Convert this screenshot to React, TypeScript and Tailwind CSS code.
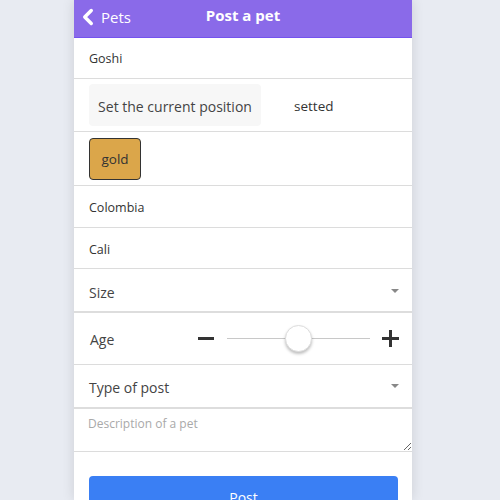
import { ChevronLeft } from 'lucide-react';

export default function App() {
  const font = { fontFamily: '"Open Sans", "Noto Sans", sans-serif' };

  return (
    <div className="w-[500px] h-[500px] overflow-hidden bg-[#e8ebf2]" style={font}>
      <div className="ml-[74px] w-[338px] h-[500px] bg-white shadow-[0_0_12px_rgba(0,0,0,0.12)]">
        {/* Header */}
        <div className="relative h-[38px] bg-[#8a6ae9] border-b border-[#7453ef] flex items-center pb-[3px]">
          <div className="flex items-center text-white text-[15px] pl-[1px]">
            <ChevronLeft className="w-[26px] h-[26px]" strokeWidth={3.2} />
            <span>Pets</span>
          </div>
          <div className="absolute left-0 right-0 text-center text-white text-[15px] font-bold pointer-events-none pb-[3px]">
            Post a pet
          </div>
        </div>

        {/* Name */}
        <div className="h-[41px] border-b border-[#dcdcdc] flex items-center px-[15px] pt-[3px] text-[12.5px] text-[#333]">
          Goshi
        </div>

        {/* Position */}
        <div className="h-[53px] border-b border-[#dcdcdc] flex items-center px-[15px]">
          <div className="w-[172px] h-[42px] bg-[#f7f7f7] rounded flex items-center justify-center pt-[2px] text-[14px] text-[#444]">
            Set the current position
          </div>
          <span className="ml-[33px] mt-[3px] text-[13.5px] text-[#333]">setted</span>
        </div>

        {/* Colour */}
        <div className="h-[54px] border-b border-[#dcdcdc] flex items-center px-[15px]">
          <div className="w-[52px] h-[42px] bg-[#dba64a] border border-[#333] rounded-[4px] flex items-center justify-center pt-[2px] text-[13.5px] text-[#333]">
            gold
          </div>
        </div>

        {/* Country */}
        <div className="h-[42px] border-b border-[#dcdcdc] flex items-center px-[15px] pt-[4px] text-[12.5px] text-[#333]">
          Colombia
        </div>

        {/* City */}
        <div className="h-[41px] border-b border-[#dcdcdc] flex items-center px-[15px] pt-[4px] text-[12.5px] text-[#333]">
          Cali
        </div>

        {/* Size */}
        <div className="h-[44px] border-b-2 border-[#dddddd] flex items-center justify-between px-[15px] text-[14px] text-[#444]">
          <span className="mt-[4px]">Size</span>
          <span className="w-0 h-0 border-l-[4px] border-r-[4px] border-t-[4px] border-l-transparent border-r-transparent border-t-[#888] mr-[-2px] mt-[2px]" />
        </div>

        {/* Age */}
        <div className="h-[52px] border-b border-[#dcdcdc] flex items-center pl-[16px] pr-[13px] text-[14px] text-[#444]">
          <span className="w-[108px] mt-[1px]">Age</span>
          <span className="w-[16px] h-[3px] bg-[#333]" />
          <div className="relative flex-1 ml-[13px] mr-[12px] h-[26px] flex items-center">
            <div className="w-full h-px bg-[#c8c8c8]" />
            <div className="absolute left-[58px] w-[27px] h-[27px] rounded-full bg-white border border-[#ddd] shadow-[0_2px_3px_rgba(0,0,0,0.25)]" />
          </div>
          <span className="relative w-[17px] h-[17px]">
            <span className="absolute left-0 top-[7px] w-[17px] h-[3px] bg-[#333]" />
            <span className="absolute left-[7px] top-0 w-[3px] h-[17px] bg-[#333]" />
          </span>
        </div>

        {/* Type of post */}
        <div className="h-[44px] border-b-2 border-[#dddddd] flex items-center justify-between px-[15px] text-[14px] text-[#444]">
          <span className="mt-[2px]">Type of post</span>
          <span className="w-0 h-0 border-l-[4px] border-r-[4px] border-t-[4px] border-l-transparent border-r-transparent border-t-[#888] mr-[-2px]" />
        </div>

        {/* Description */}
        <div className="h-[43px] border-b border-[#dcdcdc]">
          <textarea
            placeholder="Description of a pet"
            className="block w-full h-[42px] resize-y px-[14px] pt-[6px] text-[12px] text-[#333] placeholder:text-[#a9a9a9] outline-none"
            style={font}
          />
        </div>

        {/* Submit */}
        <div className="pt-[24px] pl-[15px] pr-[14px]">
          <button className="w-full h-[42px] bg-[#3a7ff4] rounded-[4px] text-white text-[14px]" style={font}>
            Post
          </button>
        </div>
      </div>
    </div>
  );
}
